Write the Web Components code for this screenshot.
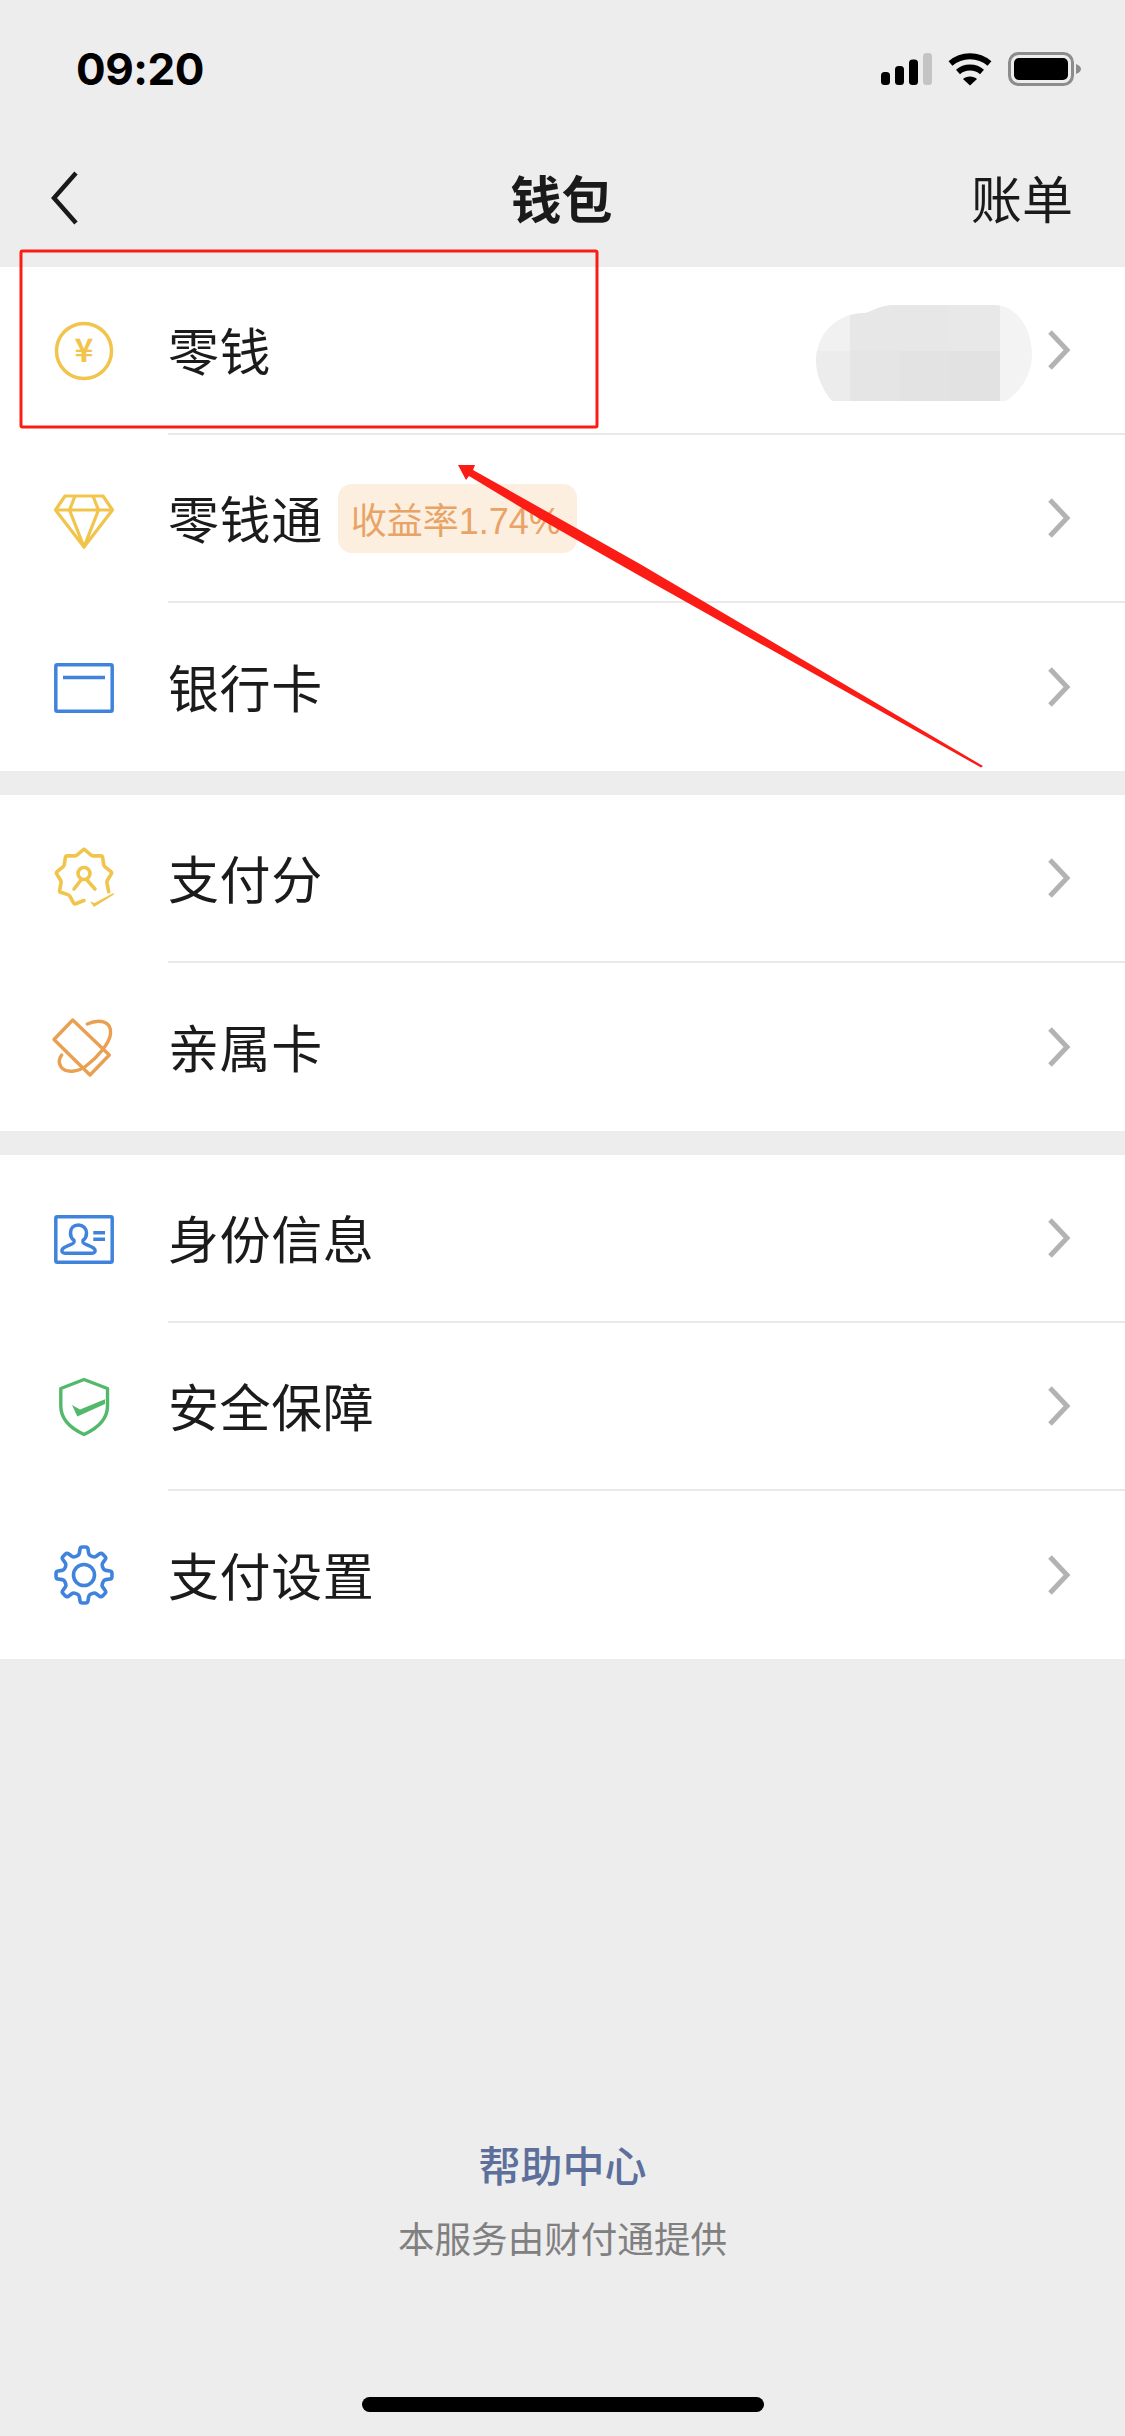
<!DOCTYPE html>
<html lang="zh">
<head>
<meta charset="utf-8">
<title>钱包</title>
<style>
  html, body { margin: 0; padding: 0; }
  body {
    width: 1125px;
    height: 2436px;
    overflow: hidden;
    background: #ededed;
    font-family: "Noto Sans CJK SC", "Liberation Sans", sans-serif;
  }
</style>
</head>
<body>
<wallet-page>
  <status-bar time="09:20"></status-bar>
  <nav-bar title="钱包" action="账单"></nav-bar>

  <list-section>
    <list-row icon="coin" label="零钱"><blur-patch></blur-patch></list-row>
    <list-row icon="diamond" label="零钱通"><rate-tag slot="tag">收益率1.74%</rate-tag></list-row>
    <list-row icon="card" label="银行卡" last></list-row>
  </list-section>

  <list-section>
    <list-row icon="score" label="支付分"></list-row>
    <list-row icon="family" label="亲属卡" last></list-row>
  </list-section>

  <list-section>
    <list-row icon="id" label="身份信息"></list-row>
    <list-row icon="shield" label="安全保障"></list-row>
    <list-row icon="gear" label="支付设置" last></list-row>
  </list-section>

  <page-footer help="帮助中心" note="本服务由财付通提供"></page-footer>
  <screen-markup></screen-markup>
</wallet-page>

<script>
const YELLOW = '#f1c54b';
const BLUE = '#4083dc';

function polar(cx, cy, deg, r) {
  const rad = deg * Math.PI / 180;
  return [cx + r * Math.cos(rad), cy + r * Math.sin(rad)];
}

// path through the points with every corner rounded off
function roundedPath(pts, radius, closed) {
  const n = pts.length;
  const fmt = p => p[0].toFixed(2) + ' ' + p[1].toFixed(2);
  const toward = (a, b) => {
    const d = Math.hypot(b[0] - a[0], b[1] - a[1]);
    const t = Math.min(radius / d, 0.5);
    return [a[0] + (b[0] - a[0]) * t, a[1] + (b[1] - a[1]) * t];
  };
  let d = '';
  for (let i = 0; i < n; i++) {
    const p = pts[i];
    if (!closed && (i === 0 || i === n - 1)) {
      d += (i === 0 ? 'M' : 'L') + fmt(p);
      continue;
    }
    const prev = pts[(i - 1 + n) % n];
    const next = pts[(i + 1) % n];
    d += (i === 0 ? 'M' : 'L') + fmt(toward(p, prev)) + 'Q' + fmt(p) + ' ' + fmt(toward(p, next));
  }
  return d + (closed ? 'Z' : '');
}

function badgePath() {
  const pts = [];
  for (let i = 0; i <= 15; i++) {
    pts.push(polar(30, 28.5, 90 + i * 20, i % 2 ? 28.5 : 23));
  }
  return roundedPath(pts, 1.5, false);
}

function gearPath() {
  const pts = [];
  for (let i = 0; i < 8; i++) {
    const c = i * 45 - 90;
    pts.push(polar(30, 30, c - 14, 20.5));
    pts.push(polar(30, 30, c - 7.5, 28.2));
    pts.push(polar(30, 30, c + 7.5, 28.2));
    pts.push(polar(30, 30, c + 14, 20.5));
  }
  return roundedPath(pts, 2, true);
}

const ICONS = {
  coin: `<circle cx="30" cy="30" r="27.5" fill="none" stroke="${YELLOW}" stroke-width="3.5"/>
         <text x="30" y="41" text-anchor="middle" font-size="32" font-weight="700" fill="${YELLOW}" font-family="'Noto Sans CJK SC', sans-serif">¥</text>`,
  diamond: `<g fill="none" stroke="${YELLOW}" stroke-width="3.2" stroke-linejoin="round">
         <path d="M11 7H49L58.5 21 30 58 1.5 21Z"/>
         <path d="M1.5 21H58.5"/>
         <path d="M21 7 15.5 21 30 58 44.5 21 39 7"/></g>`,
  card: `<g fill="none" stroke="${BLUE}" stroke-width="3.5">
         <rect x="1.8" y="7.8" width="56.4" height="46.4" rx="1.5"/>
         <path d="M9 20.5H51"/></g>`,
  score: `<g fill="none" stroke="${YELLOW}" stroke-width="3.6" stroke-linejoin="round" stroke-linecap="round">
         <path d="${badgePath()}"/>
         <circle cx="30" cy="24.5" r="6"/>
         <path d="M27 31 20 40M33 31 41 40"/></g>
         <path d="M36 52.500 40.500 54 59.500 44 60 45.500 40 58Z" fill="${YELLOW}"/>`,
  family: `<g fill="none" stroke="#e9a052" stroke-width="3.4" stroke-linejoin="round" stroke-linecap="round">
         <path d="M0 22.500 18.700 3 55.300 38 36 58Z"/>
         <path d="M33.300 7C44 2 58 3 56.500 17 55.500 26 44 40 32 49 24 55 12 56.500 7 50 4.500 46 4.500 42 7.700 38"/></g>`,
  id: `<g fill="none" stroke="${BLUE}" stroke-width="3.5" stroke-linejoin="round">
         <rect x="1.8" y="7.8" width="56.4" height="45.4" rx="1.5"/>
         <path d="M24.3 16C19.5 16 16.5 19.5 16.5 24 16.5 27.5 18 30 20 31.5V33C20 36 9 37 8 41 7.5 43 9 44.3 11 44.3H38C40 44.3 41.5 43 41 41 40 37 29 36 29 33V31.5C31 30 32.5 27.5 32.5 24 32.5 19.5 29 16 24.3 16Z"/>
         <path d="M39.3 23.7H51M39.3 30.3H51"/></g>`,
  shield: `<path d="M30 2.500 53.500 11.500V29C53.500 41 44 51 30 57.500 16 51 6.800 41 6.800 29V11.500Z" fill="none" stroke="#52b96b" stroke-width="3.4" stroke-linejoin="round"/>
         <path d="M18 28 26 32.500 51 22.300V27L23.300 39.500Z" fill="#52b96b"/>`,
  gear: `<g fill="none" stroke="${BLUE}" stroke-width="3.6" stroke-linejoin="round">
         <path d="${gearPath()}"/>
         <circle cx="30" cy="30" r="10.5"/></g>`
};

class WalletPage extends HTMLElement {
  constructor() {
    super();
    this.attachShadow({ mode: 'open' });
    this.shadowRoot.innerHTML = `
      <style>
        :host {
          display: flex;
          flex-direction: column;
          position: relative;
          width: 1125px;
          height: 2436px;
          background: #ededed;
        }
      </style>
      <slot></slot>
    `;
  }
}

class StatusBar extends HTMLElement {
  constructor() {
    super();
    this.attachShadow({ mode: 'open' });
  }

  connectedCallback() {
    this.shadowRoot.innerHTML = `
      <style>
        :host {
          display: flex;
          align-items: flex-start;
          justify-content: space-between;
          height: 132px;
          box-sizing: border-box;
          padding: 0 43px 0 76px;
        }
        .time {
          font: 700 44px/46px Inter, "Liberation Sans", sans-serif;
          color: #000;
          margin-top: 46px;
          letter-spacing: -0.5px;
        }
        .icons { display: flex; align-items: flex-start; gap: 15px; margin-top: 52px; }
        svg { display: block; }
      </style>
      <div class="time">${this.getAttribute('time')}</div>
      <div class="icons">
        <svg width="51" height="34" viewBox="0 0 51 34">
          <rect x="0" y="20" width="9" height="13" rx="3.5"/>
          <rect x="14" y="14" width="9" height="19" rx="3.5"/>
          <rect x="28" y="7.500" width="9" height="25.500" rx="3.5"/>
          <rect x="42" y="1" width="9" height="32" rx="3.5" fill="#c4c4c4"/>
        </svg>
        <svg width="46" height="34" viewBox="0 0 46 34">
          <path d="M3.500 11.500C14.500 1.800 31.500 1.800 42.500 11.500" fill="none" stroke="#000" stroke-width="5.800"/>
          <path d="M11 20C17.500 14 28.500 14 35 20" fill="none" stroke="#000" stroke-width="5.800"/>
          <path d="M16 27C19 23.500 27 23.500 30 27L23 33.500Z"/>
        </svg>
        <svg width="74" height="34" viewBox="0 0 74 34">
          <rect x="1.500" y="1.500" width="63" height="31" rx="9" fill="none" stroke="#8c8c8c" stroke-width="3"/>
          <rect x="6" y="6" width="54" height="22" rx="5"/>
          <path d="M68 12C71 13 73 15 73 17 73 19 71 21 68 22Z" fill="#8c8c8c"/>
        </svg>
      </div>
    `;
  }
}

class NavBar extends HTMLElement {
  constructor() {
    super();
    this.attachShadow({ mode: 'open' });
  }

  connectedCallback() {
    this.shadowRoot.innerHTML = `
      <style>
        :host {
          display: grid;
          grid-template-columns: 1fr auto 1fr;
          align-items: center;
          height: 132px;
          margin-bottom: 3px;
          box-sizing: border-box;
          padding: 0 52px 0 50px;
          color: #1a1a1a;
          font-size: 51px;
          line-height: 60px;
        }
        .title { font-weight: 700; margin-top: -3px; }
        .action { justify-self: end; margin-top: -3px; }
        svg { display: block; }
      </style>
      <svg width="30" height="54" viewBox="0 0 30 54">
        <path d="M26 2 4 27 26 52" fill="none" stroke="#1a1a1a" stroke-width="4.500"/>
      </svg>
      <div class="title">${this.getAttribute('title')}</div>
      <div class="action">${this.getAttribute('action')}</div>
    `;
  }
}

class ListSection extends HTMLElement {
  constructor() {
    super();
    this.attachShadow({ mode: 'open' });
    this.shadowRoot.innerHTML = `
      <style>
        :host {
          display: block;
          background: #fff;
          margin-bottom: 24px;
        }
      </style>
      <slot></slot>
    `;
  }
}

class ListRow extends HTMLElement {
  constructor() {
    super();
    this.attachShadow({ mode: 'open' });
  }

  connectedCallback() {
    const last = this.hasAttribute('last');
    this.shadowRoot.innerHTML = `
      <style>
        :host {
          display: flex;
          align-items: stretch;
          height: 168px;
          padding-left: 54px;
          color: #1b1b1b;
        }
        .icon { flex: none; align-self: center; width: 60px; height: 60px; margin-right: 54px; }
        .icon svg { display: block; overflow: visible; }
        .body {
          flex: 1;
          display: flex;
          align-items: center;
          box-sizing: border-box;
          padding-right: 54px;
          border-bottom: ${last ? 'none' : '2px solid #e9e9e9'};
        }
        .label { font-size: 51px; line-height: 60px; letter-spacing: 0.6px; margin-top: -3px; }
        .tag { display: flex; margin-left: 15px; }
        .value { display: flex; margin-left: auto; margin-right: 15px; }
        .chevron { display: block; flex: none; }
      </style>
      <div class="icon">
        <svg width="60" height="60" viewBox="0 0 60 60">${ICONS[this.getAttribute('icon')]}</svg>
      </div>
      <div class="body">
        <div class="label">${this.getAttribute('label')}</div>
        <div class="tag"><slot name="tag"></slot></div>
        <div class="value"><slot></slot></div>
        <svg class="chevron" width="24" height="40" viewBox="0 0 24 40">
          <path d="M3 2 20 20 3 38" fill="none" stroke="#b3b3b3" stroke-width="5"/>
        </svg>
      </div>
    `;
  }
}

class RateTag extends HTMLElement {
  constructor() {
    super();
    this.attachShadow({ mode: 'open' });
    this.shadowRoot.innerHTML = `
      <style>
        :host {
          display: flex;
          align-items: center;
          height: 69px;
          box-sizing: border-box;
          padding: 0 16px 0 13px;
          border-radius: 14px;
          background: #fcefe0;
          color: #e8a466;
          font-family: "Liberation Sans", "Noto Sans CJK SC", sans-serif;
          font-size: 36px;
          white-space: nowrap;
        }
      </style>
      <slot></slot>
    `;
  }
}

// pixelated mosaic that hides the balance
class BlurPatch extends HTMLElement {
  constructor() {
    super();
    this.attachShadow({ mode: 'open' });
    this.shadowRoot.innerHTML = `
      <style>
        :host { display: block; width: 216px; height: 96px; margin-top: 6px; }
        svg { display: block; }
      </style>
      <svg width="216" height="96" viewBox="0 0 216 96">
        <defs>
          <clipPath id="blob">
            <path d="M16 96C6 84 0 70 0 56 0 28 22 8 48 8 54 8 62 0 78 0H178C200 0 216 22 216 50 216 68 206 86 190 96Z"/>
          </clipPath>
        </defs>
        <g clip-path="url(#blob)">
          <rect x="0" y="0" width="34" height="46" fill="#f1f1f1"/>
          <rect x="0" y="46" width="34" height="50" fill="#ececec"/>
          <rect x="34" y="0" width="50" height="46" fill="#e7e7e7"/>
          <rect x="34" y="46" width="50" height="50" fill="#e5e5e5"/>
          <rect x="84" y="0" width="50" height="46" fill="#e7e7e7"/>
          <rect x="84" y="46" width="50" height="50" fill="#e3e3e3"/>
          <rect x="134" y="0" width="50" height="46" fill="#e8e8e8"/>
          <rect x="134" y="46" width="50" height="50" fill="#e2e2e2"/>
          <rect x="184" y="0" width="32" height="96" fill="#f3f3f3"/>
        </g>
      </svg>
    `;
  }
}

class PageFooter extends HTMLElement {
  constructor() {
    super();
    this.attachShadow({ mode: 'open' });
  }

  connectedCallback() {
    this.shadowRoot.innerHTML = `
      <style>
        :host {
          display: flex;
          flex-direction: column;
          align-items: center;
          margin-top: auto;
          padding-bottom: 24px;
        }
        .help { font-size: 42px; line-height: 50px; font-weight: 500; color: #5d6f9b; margin-top: -2px; }
        .note { font-size: 36.6px; line-height: 50px; margin-top: 24px; color: #808080; }
        .home { width: 402px; height: 15px; margin-top: 134px; border-radius: 8px; background: #000; }
      </style>
      <div class="help">${this.getAttribute('help')}</div>
      <div class="note">${this.getAttribute('note')}</div>
      <div class="home"></div>
    `;
  }
}

// the red annotations drawn on top of the screenshot
class ScreenMarkup extends HTMLElement {
  constructor() {
    super();
    this.attachShadow({ mode: 'open' });
    this.shadowRoot.innerHTML = `
      <style>
        :host { position: absolute; inset: 0; pointer-events: none; }
        svg { position: absolute; left: 0; top: 0; }
      </style>
      <svg width="1125" height="2436" viewBox="0 0 1125 2436">
        <rect x="21" y="251" width="576" height="176" rx="1.500" fill="none" stroke="#fb1c16" stroke-width="3"/>
        <polygon points="458,465 475,465 473,470 640,564 983,766 981,767.500 640,576 540,519 469,476 466,480" fill="#fb1c16"/>
      </svg>
    `;
  }
}

customElements.define('wallet-page', WalletPage);
customElements.define('status-bar', StatusBar);
customElements.define('nav-bar', NavBar);
customElements.define('list-section', ListSection);
customElements.define('list-row', ListRow);
customElements.define('rate-tag', RateTag);
customElements.define('blur-patch', BlurPatch);
customElements.define('page-footer', PageFooter);
customElements.define('screen-markup', ScreenMarkup);
</script>
</body>
</html>
